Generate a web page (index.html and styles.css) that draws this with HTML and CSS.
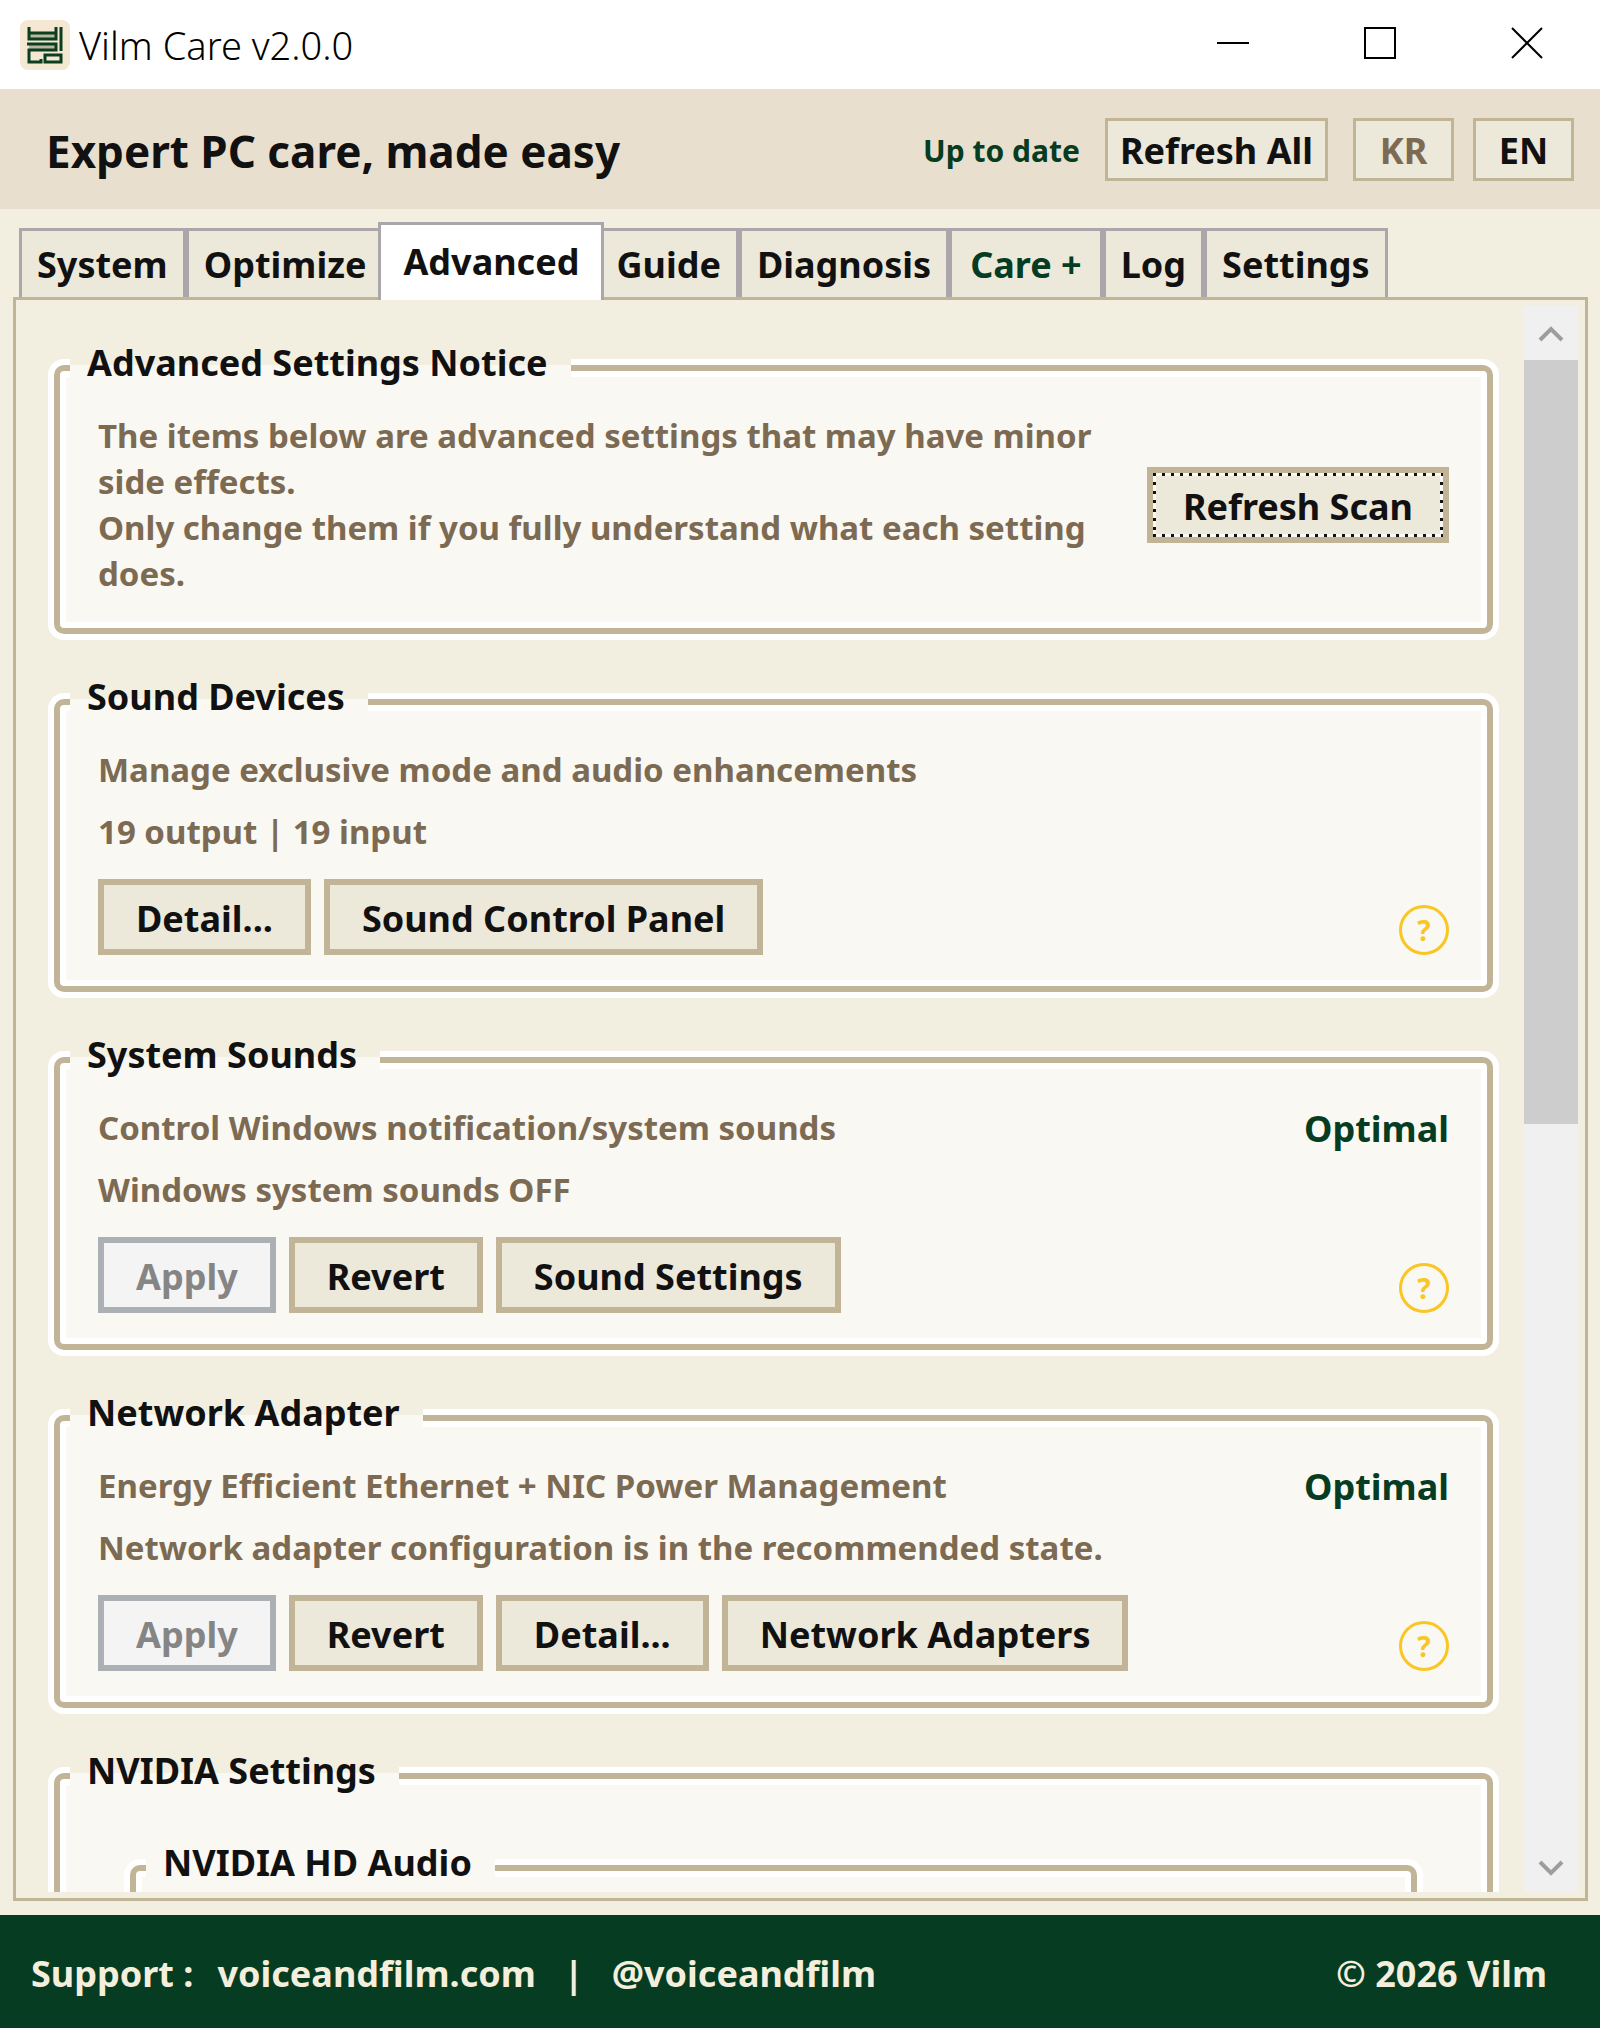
FILE: index.html
```html
<!DOCTYPE html>
<html lang="en">
<head>
<meta charset="utf-8">
<title>Vilm Care v2.0.0</title>
<link rel="stylesheet" href="styles.css">
</head>
<body>
<div class="titlebar">
  <svg class="logo" viewBox="0 0 50 50" aria-hidden="true">
    <rect width="50" height="50" rx="8" fill="#f4e8d2"/>
    <path fill="#b9b79f" d="M9 13h26v5H9zM9 24h26v5H9z"/>
    <path fill="none" stroke="#0b3d20" stroke-width="3" d="M9 7v12h27V7M9 13h27M41 7v24M7 24h29v6H9v12h12v-3M25 35h16v7H25z"/>
  </svg>
  <span class="app-name">Vilm Care v2.0.0</span>
  <div class="window-controls">
    <button type="button" aria-label="Minimize"><svg viewBox="0 0 32 32"><path d="M0 16h32"/></svg></button>
    <button type="button" aria-label="Maximize"><svg viewBox="0 0 32 32"><path d="M1 1h30v30H1z"/></svg></button>
    <button type="button" aria-label="Close"><svg viewBox="0 0 32 32"><path d="M1 1l30 30M31 1L1 31"/></svg></button>
  </div>
</div>

<header class="header">
  <h1>Expert PC care, made easy</h1>
  <span class="update-state">Up to date</span>
  <button type="button" class="btn-small">Refresh All</button>
  <div class="languages">
    <button type="button" class="btn-small muted">KR</button>
    <button type="button" class="btn-small">EN</button>
  </div>
</header>

<nav class="tabs" role="tablist">
  <button type="button" role="tab" class="tab">System</button>
  <button type="button" role="tab" class="tab">Optimize</button>
  <button type="button" role="tab" class="tab active" aria-selected="true">Advanced</button>
  <button type="button" role="tab" class="tab">Guide</button>
  <button type="button" role="tab" class="tab">Diagnosis</button>
  <button type="button" role="tab" class="tab green">Care +</button>
  <button type="button" role="tab" class="tab">Log</button>
  <button type="button" role="tab" class="tab">Settings</button>
</nav>

<main class="panel">
  <div class="content">
    <section class="group">
      <h2>Advanced Settings Notice</h2>
      <div class="row notice">
        <p>The items below are advanced settings that may have minor side effects.<br>Only change them if you fully understand what each setting does.</p>
        <button type="button" class="btn focused">Refresh Scan</button>
      </div>
    </section>

    <section class="group">
      <h2>Sound Devices</h2>
      <div class="row"><p>Manage exclusive mode and audio enhancements</p></div>
      <p class="detail">19 output | 19 input</p>
      <div class="actions">
        <button type="button" class="btn">Detail...</button>
        <button type="button" class="btn">Sound Control Panel</button>
        <button type="button" class="help" aria-label="Help">?</button>
      </div>
    </section>

    <section class="group">
      <h2>System Sounds</h2>
      <div class="row"><p>Control Windows notification/system sounds</p><strong class="state">Optimal</strong></div>
      <p class="detail">Windows system sounds OFF</p>
      <div class="actions">
        <button type="button" class="btn" disabled>Apply</button>
        <button type="button" class="btn">Revert</button>
        <button type="button" class="btn">Sound Settings</button>
        <button type="button" class="help" aria-label="Help">?</button>
      </div>
    </section>

    <section class="group">
      <h2>Network Adapter</h2>
      <div class="row"><p>Energy Efficient Ethernet + NIC Power Management</p><strong class="state">Optimal</strong></div>
      <p class="detail">Network adapter configuration is in the recommended state.</p>
      <div class="actions">
        <button type="button" class="btn" disabled>Apply</button>
        <button type="button" class="btn">Revert</button>
        <button type="button" class="btn">Detail...</button>
        <button type="button" class="btn">Network Adapters</button>
        <button type="button" class="help" aria-label="Help">?</button>
      </div>
    </section>

    <section class="group">
      <h2>NVIDIA Settings</h2>
      <section class="group nested">
        <h2>NVIDIA HD Audio</h2>
      </section>
    </section>
  </div>
  <div class="scrollbar" aria-hidden="true">
    <svg viewBox="0 0 54 54"><path d="M16 34l11-11 11 11"/></svg>
    <div class="track"><div class="thumb"></div></div>
    <svg viewBox="0 0 54 54"><path d="M16 24l11 11 11-11"/></svg>
  </div>
</main>

<footer class="footer">
  <span>Support :</span>
  <a href="#site">voiceandfilm.com</a>
  <span class="divider">|</span>
  <a href="#handle">@voiceandfilm</a>
  <span class="copyright">© 2026 Vilm</span>
</footer>
</body>
</html>
```
FILE: styles.css
```css
:root {
  --page: #f3efe0;
  --card: #faf8f2;
  --line: #c2b497;
  --button: #ece8da;
  --ink: #111;
  --muted: #7c6a52;
  --green: #053c22;
}

* { box-sizing: border-box; margin: 0; padding: 0; }

body {
  display: flex;
  flex-direction: column;
  height: 100vh;
  overflow: hidden;
  background: var(--page);
  color: var(--ink);
  font: 700 36px/40px "Noto Sans", "Open Sans", sans-serif;
}

button { font: inherit; color: inherit; white-space: nowrap; }

.titlebar {
  display: flex;
  align-items: center;
  flex: none;
  height: 89px;
  padding-left: 20px;
  background: #fff;
}
.logo { width: 50px; height: 50px; }
.app-name { margin-left: 9px; font-size: 38px; font-weight: 300; color: #000; }
.window-controls { display: flex; margin-left: auto; align-self: stretch; }
.window-controls button {
  display: grid;
  place-items: center;
  width: 147px;
  padding-bottom: 3px;
  border: 0;
  background: none;
}
.window-controls svg { width: 32px; height: 32px; fill: none; stroke: #000; stroke-width: 2; }

.header {
  display: flex;
  align-items: center;
  gap: 25px;
  flex: none;
  height: 120px;
  padding: 0 26px 0 46px;
  background: #e8dfce;
}
.header h1 { margin-right: auto; padding-top: 4px; font-size: 44px; }
.update-state { padding-top: 4px; font-size: 30px; color: var(--green); }
.languages { display: flex; gap: 19px; }
.btn-small {
  min-width: 101px;
  height: 63px;
  padding: 4px 12px 0;
  border: 3px solid var(--line);
  background: var(--button);
}
.btn-small.muted { color: var(--muted); }

.tabs {
  display: flex;
  align-items: flex-end;
  flex: none;
  height: 88px;
  padding-left: 19px;
}
.tab {
  height: 69px;
  padding: 2px 15px 0;
  border: 3px solid #aaa6a9;
  border-bottom: 0;
  background: #ece9db;
}
.tab.active {
  position: relative;
  z-index: 1;
  height: 78px;
  margin: 0 -6px -3px;
  padding: 0 22px 2px;
  background: #fff;
}
.tab.green { padding: 2px 18px 0; color: var(--green); }

.panel {
  display: flex;
  flex: 1;
  min-height: 0;
  margin: 0 12px 14px 13px;
  padding: 6px 7px 6px 38px;
  border: 3px solid var(--line);
}
.content {
  flex: 1;
  min-width: 0;
  margin-left: -6px;
  padding: 59px 31px 0 6px;
  overflow: hidden;
}

.group {
  --behind: var(--page);
  margin-bottom: 65px;
  padding: 0 38px 31px;
  border: 6px solid var(--line);
  border-radius: 10px;
  background: var(--card);
  box-shadow: 0 0 0 6px #fff, inset 0 0 0 6px #fff;
}
.group h2 {
  width: fit-content;
  margin: -30px 0 30px -28px;
  padding: 2px 23px 0 17px;
  background: linear-gradient(var(--behind) 24px, var(--card) 24px);
  font-size: 36px;
}
.group.nested {
  --behind: var(--card);
  height: 320px;
  margin: 74px 32px 0;
}
.group h2:has(+ .nested) { margin-bottom: 0; }

.row { display: flex; justify-content: space-between; }
.notice { align-items: center; gap: 24px; }
.group p, .state { line-height: 46px; }
.group p { font-size: 33px; color: var(--muted); }
.detail { margin-top: 16px; }
.state { margin: 1px 0 -1px; font-weight: 700; color: var(--green); }

.actions { display: flex; align-items: flex-end; gap: 13px; margin-top: 24px; }
.btn {
  flex: none;
  height: 76px;
  padding: 4px 32px 0;
  border: 6px solid var(--line);
  background: var(--button);
}
.btn:disabled { border-color: #abb0b5; background: #f4f4f4; color: #858585; }
.btn.focused {
  padding: 4px 30px 0;
  background:
    linear-gradient(90deg, #111 3px, var(--card) 3px) 0 0 / 9px 3px repeat-x,
    linear-gradient(90deg, #111 3px, var(--card) 3px) 0 100% / 9px 3px repeat-x,
    linear-gradient(#111 3px, var(--card) 3px) 0 0 / 3px 9px repeat-y,
    linear-gradient(#111 3px, var(--card) 3px) 100% 0 / 3px 9px repeat-y,
    var(--button);
}
.help {
  width: 50px;
  height: 50px;
  margin-left: auto;
  border: 3px solid #f9c623;
  border-radius: 50%;
  background: none;
  color: #f9c623;
  font-size: 28px;
  line-height: 28px;
}

.scrollbar { display: flex; flex-direction: column; flex: none; width: 54px; background: #f0f0f0; }
.scrollbar svg { width: 54px; height: 54px; fill: none; stroke: #9d9d9d; stroke-width: 4; }
.track { flex: 1; }
.thumb { height: 51.7%; background: #cdcdcd; }

.footer {
  display: flex;
  align-items: center;
  flex: none;
  height: 113px;
  padding: 4px 53px 0 31px;
  background: var(--green);
  color: #f4eedc;
}
.footer a { margin-left: 24px; color: inherit; text-decoration: none; }
.footer .divider { margin: 0 4px 0 28px; }
.copyright { margin-left: auto; }
```
